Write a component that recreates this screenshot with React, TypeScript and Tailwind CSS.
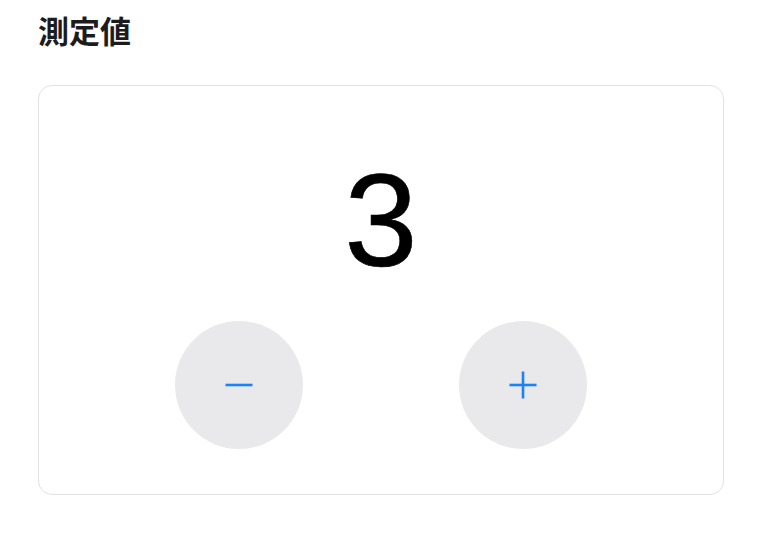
import React from "react";

export default function App() {
  return (
    <div className="w-[775px] h-[537px] bg-white pl-[38px] pt-[14px]">
      <h2
        className="text-[31px] leading-none font-bold text-[#1c1c1e]"
        style={{ fontFamily: '"Noto Sans CJK JP", "Noto Sans", sans-serif' }}
      >
        測定値
      </h2>
      <div className="mt-[40px] w-[686px] h-[410px] rounded-[14px] border-[1.5px] border-[#e2e2e4] flex flex-col items-center pt-[69px]">
        <div
          className="text-[132px] leading-none text-black"
          style={{ fontFamily: '"Liberation Sans", Arial, sans-serif', WebkitTextStroke: "0.6px black" }}
        >
          3
        </div>
        <div className="mt-[34px] flex gap-[156px]">
          <button className="w-[128px] h-[128px] rounded-full bg-[#e9e9eb] flex items-center justify-center">
            <svg width="28" height="28" viewBox="0 0 28 28">
              <line x1="0.5" y1="14" x2="27.5" y2="14" stroke="#1a82fb" strokeWidth="2.6" />
            </svg>
          </button>
          <button className="w-[128px] h-[128px] rounded-full bg-[#e9e9eb] flex items-center justify-center">
            <svg width="28" height="28" viewBox="0 0 28 28">
              <line x1="0.5" y1="14" x2="27.5" y2="14" stroke="#1a82fb" strokeWidth="2.6" />
              <line x1="14" y1="0.5" x2="14" y2="27.5" stroke="#1a82fb" strokeWidth="2.6" />
            </svg>
          </button>
        </div>
      </div>
    </div>
  );
}
